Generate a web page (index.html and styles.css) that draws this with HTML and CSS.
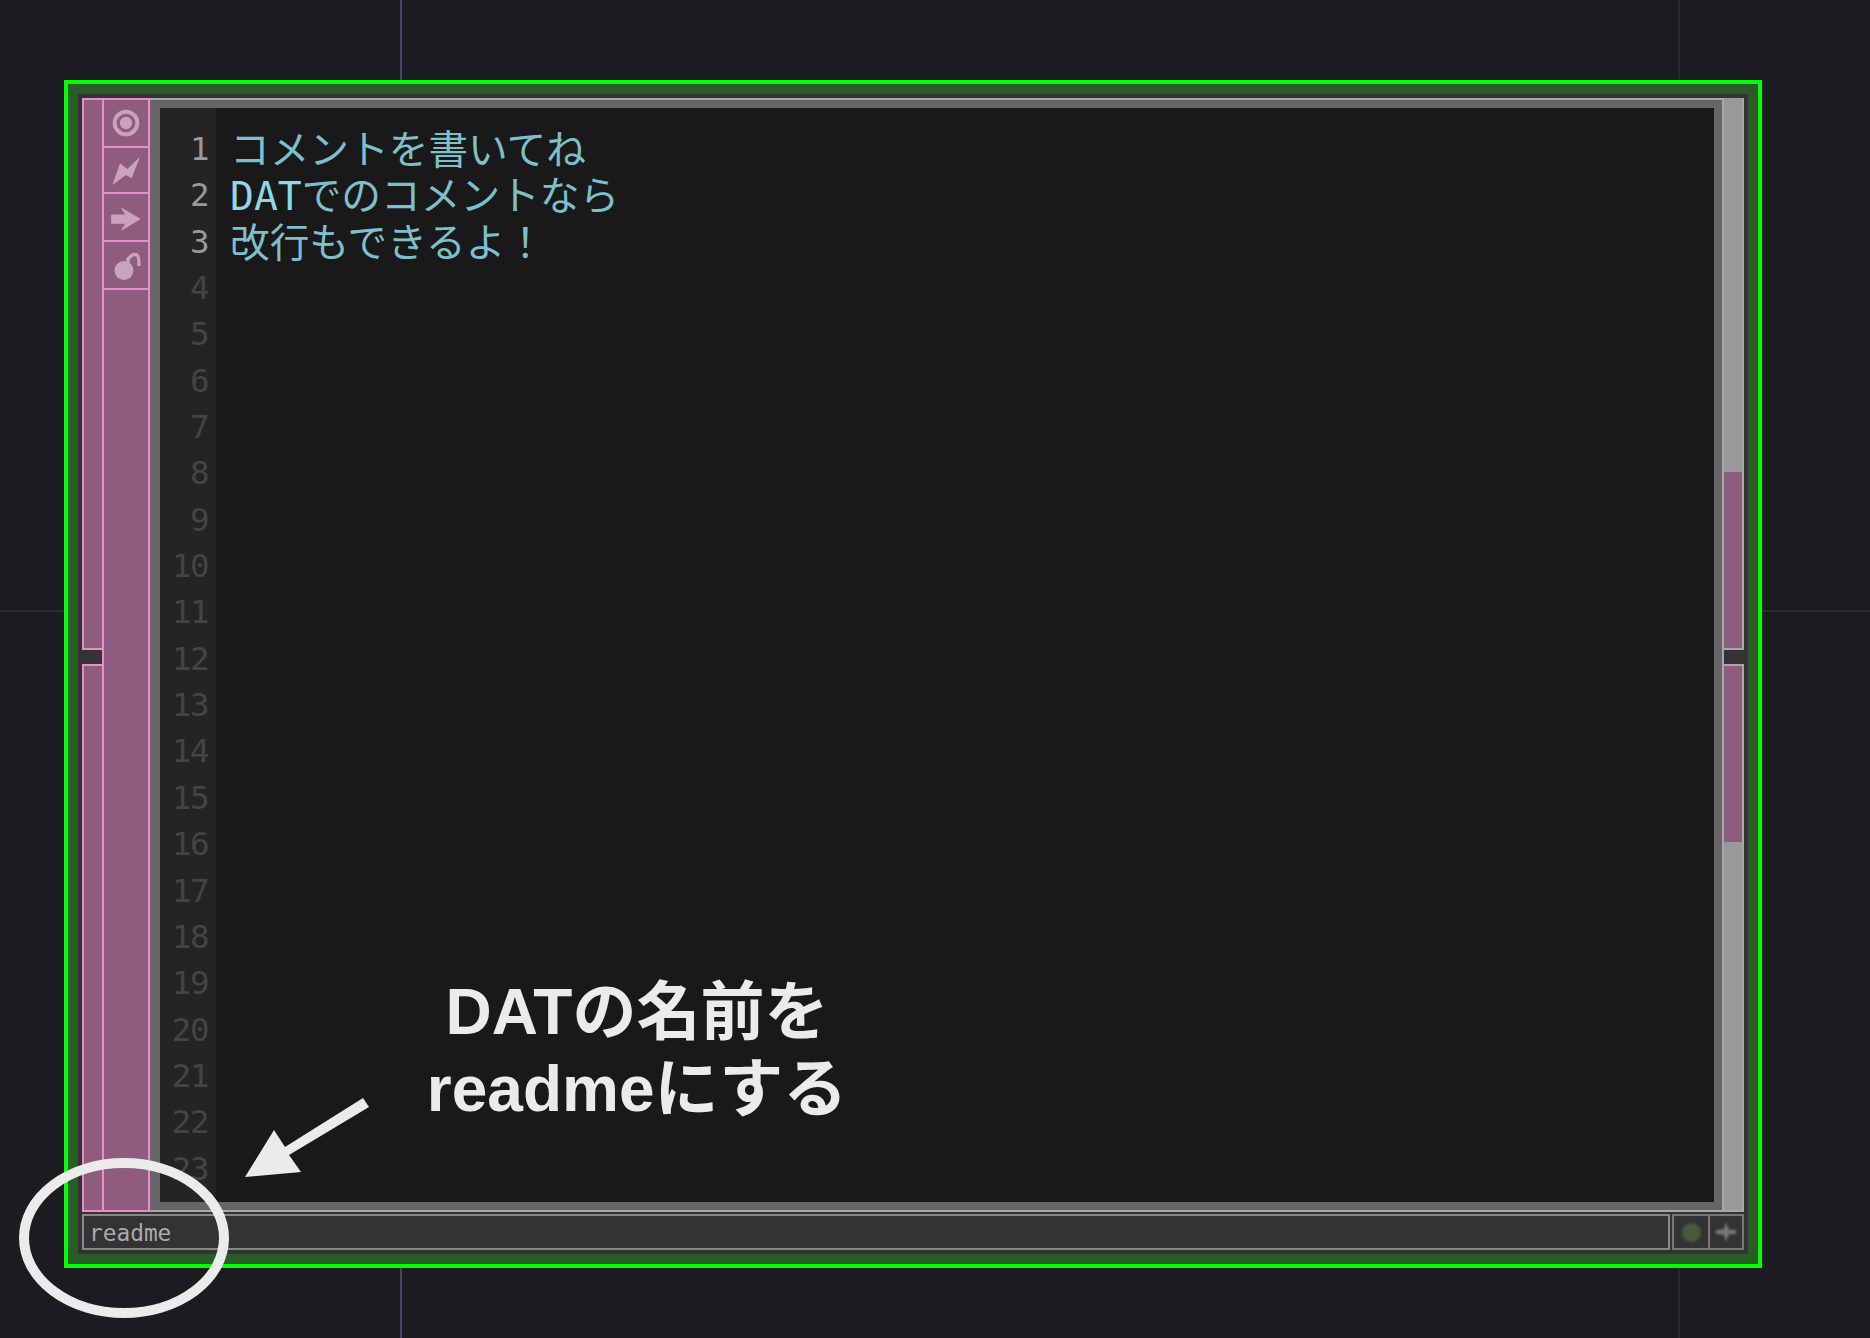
FILE: index.html
```html
<!DOCTYPE html>
<html lang="ja">
<head>
  <meta charset="UTF-8" />
  <title>readme DAT</title>
  <link rel="stylesheet" href="styles.css">
</head>
<body>
  <!-- network grid -->
  <div class="grid-v grid-v-a"></div>
  <div class="grid-v grid-v-b"></div>
  <div class="grid-h"></div>

  <div class="node">
    <div class="node-inner">
      <div class="node-main">
        <div class="flags-side">
          <div class="side-seg side-seg-top"></div>
          <div class="side-gap"></div>
          <div class="side-seg side-seg-bottom"></div>
        </div>
        <div class="flags">
          <div class="flag flag-a">
            <svg class="icon" viewBox="0 0 44 46">
              <circle cx="22" cy="23" r="11.3" fill="none" stroke="#c9a2bc" stroke-width="4" />
              <circle cx="22" cy="23" r="6.2" fill="#c9a2bc" />
            </svg>
          </div>
          <div class="flag flag-b">
            <svg class="icon" viewBox="0 0 44 44">
              <polygon points="36,8.7 27.7,30.3 22,27 8.3,37 16,15.3 23.3,21" fill="#c9a2bc" />
            </svg>
          </div>
          <div class="flag flag-c">
            <svg class="icon" viewBox="0 0 44 46">
              <polygon points="36,25 17.7,14.3 22,21 7.7,21 7.7,29.3 22,29.3 17.7,36" fill="#c9a2bc" stroke="#c9a2bc" stroke-width="1" />
            </svg>
          </div>
          <div class="flag flag-d">
            <svg class="icon" viewBox="0 0 44 46">
              <circle cx="20" cy="28.5" r="9.5" fill="#c9a2bc" />
              <path d="M24 22 L24 17 Q29 11 33 13 Q35 14 35 24" fill="none" stroke="#c9a2bc" stroke-width="3.5" />
            </svg>
          </div>
        </div>
        <div class="viewer">
          <div class="editor">
            <div class="gutter">
              <div class="num num-on">1</div>
              <div class="num num-on">2</div>
              <div class="num num-on">3</div>
              <div class="num">4</div>
              <div class="num">5</div>
              <div class="num">6</div>
              <div class="num">7</div>
              <div class="num">8</div>
              <div class="num">9</div>
              <div class="num">10</div>
              <div class="num">11</div>
              <div class="num">12</div>
              <div class="num">13</div>
              <div class="num">14</div>
              <div class="num">15</div>
              <div class="num">16</div>
              <div class="num">17</div>
              <div class="num">18</div>
              <div class="num">19</div>
              <div class="num">20</div>
              <div class="num">21</div>
              <div class="num">22</div>
              <div class="num">23</div>
            </div>
            <div class="code">
              <div class="line">コメントを書いてね</div>
              <div class="line"><span class="latin">DAT</span>でのコメントなら</div>
              <div class="line">改行もできるよ！</div>
            </div>
          </div>
        </div>
        <div class="scroller">
          <div class="scroll-seg scroll-seg-top"><div class="thumb"></div></div>
          <div class="scroll-gap"></div>
          <div class="scroll-seg scroll-seg-bottom"><div class="thumb"></div></div>
        </div>
      </div>
      <div class="node-bar">
        <div class="name">readme</div>
        <div class="bar-btn bar-dot"><span class="dot"></span></div>
        <div class="bar-btn bar-plus">
          <svg class="plus" viewBox="0 0 24 24">
            <polygon points="12,1 14.5,9 23,10 23,14 14.5,15 12,23 9.5,15 1,14 1,10 9.5,9" fill="#777" />
          </svg>
        </div>
      </div>
    </div>
  </div>

  <!-- annotation on top of the node -->
  <svg class="marks" viewBox="0 0 1870 1338">
    <ellipse cx="124" cy="1238" rx="100" ry="75" fill="none" stroke="#ebebeb" stroke-width="10" />
    <polygon points="363,1098 369,1107 289,1155 301,1172 245,1177 274,1130 285,1147" fill="#ebebeb" />
  </svg>
  <div class="note">DATの名前を<br>readmeにする</div>
</body>
</html>
```

FILE: styles.css
```css
html, body { margin: 0; padding: 0; }
body { width: 1870px; height: 1338px; background: #1b1c20; position: relative; overflow: hidden; }

.grid-v { position: absolute; top: 0; bottom: 0; width: 2px; }
.grid-v-a { left: 400px; background: #45456b; }
.grid-v-b { left: 1678px; background: #26263a; }
.grid-h { position: absolute; left: 0; right: 0; top: 610px; height: 2px; background: #2a2b30; }

.node { position: absolute; left: 64px; top: 80px; width: 1698px; height: 1188px; box-sizing: border-box; border: 4px solid #00ff00; background: #2a5c28; padding: 10px; }
.node-inner { height: 100%; box-sizing: border-box; background: #333; padding: 4px; display: flex; flex-direction: column; gap: 2px; }
.node-main { height: 1114px; display: flex; }

.flags-side { width: 20px; display: flex; flex-direction: column; }
.side-seg { flex: 1; box-sizing: border-box; background: #8e5c7c; border: 2px solid #e88ccb; border-right: 0; }
.side-seg-top { flex: 0 0 552px; }
.side-gap { flex: 0 0 14px; }

.flags { width: 48px; box-sizing: border-box; background: #8e5c7c; border: 2px solid #e88ccb; }
.flag { display: flex; border-bottom: 2px solid #e88ccb; }
.flag-a { height: 46px; }
.flag-b { height: 44px; }
.flag-c { height: 46px; }
.flag-d { height: 46px; }
.icon { width: 44px; height: 100%; filter: blur(0.5px); }

.viewer { flex: 1; box-sizing: border-box; background: #666; border-top: 2px solid #a8a8a8; border-bottom: 2px solid #a8a8a8; padding: 8px 8px 8px 10px; }
.editor { height: 100%; display: flex; background: #191919; overflow: hidden; }
.gutter { width: 56px; box-sizing: border-box; background: #242424; padding: 18px 8px 0 0; text-align: right; font-family: "DejaVu Sans Mono", monospace; font-size: 32.5px; letter-spacing: -1.5px; line-height: 46.35px; color: #444; }
.num-on { color: #999; }
.code { flex: 1; padding: 16px 0 0 14px; font-family: "Noto Sans CJK JP", sans-serif; font-size: 39.7px; line-height: 46.35px; color: #7cc0cc; }
.line { height: 46.35px; white-space: nowrap; }
.latin { font-family: "DejaVu Sans Mono", monospace; color: #90d8e4; }

.scroller { width: 22px; box-sizing: border-box; border-left: 2px solid #a8a8a8; display: flex; flex-direction: column; }
.scroll-seg { box-sizing: border-box; background: #999; border: 2px solid #a8a8a8; border-left: 0; display: flex; flex-direction: column; }
.scroll-seg-top { flex: 0 0 552px; justify-content: flex-end; border-top: 0; }
.scroll-seg-bottom { flex: 1; }
.scroll-gap { flex: 0 0 14px; background: #333; }
.thumb { height: 176px; background: #8e5c7c; }

.node-bar { height: 36px; display: flex; gap: 2px; }
.name { width: 1588px; box-sizing: border-box; background: #333; border: 2px solid #888; padding-left: 5px; font-family: "DejaVu Sans Mono", monospace; font-size: 22.8px; line-height: 35px; color: #aaa; }
.bar-btn { display: flex; align-items: center; justify-content: center; box-sizing: border-box; background: #333; border: 2px solid #777; }
.bar-dot { width: 38px; }
.bar-plus { width: 34px; margin-left: -2px; border-left: 0; }
.dot { width: 19px; height: 19px; border-radius: 50%; background: #475a3a; filter: blur(1px); }
.plus { width: 22px; height: 22px; filter: blur(0.8px); }

.marks { position: absolute; left: 0; top: 0; width: 1870px; height: 1338px; }
.note { position: absolute; left: 337px; top: 974px; width: 600px; text-align: center; font-family: "Liberation Sans", "Noto Sans CJK JP", sans-serif; font-weight: bold; font-size: 64px; line-height: 77px; color: #ebebeb; }
```
